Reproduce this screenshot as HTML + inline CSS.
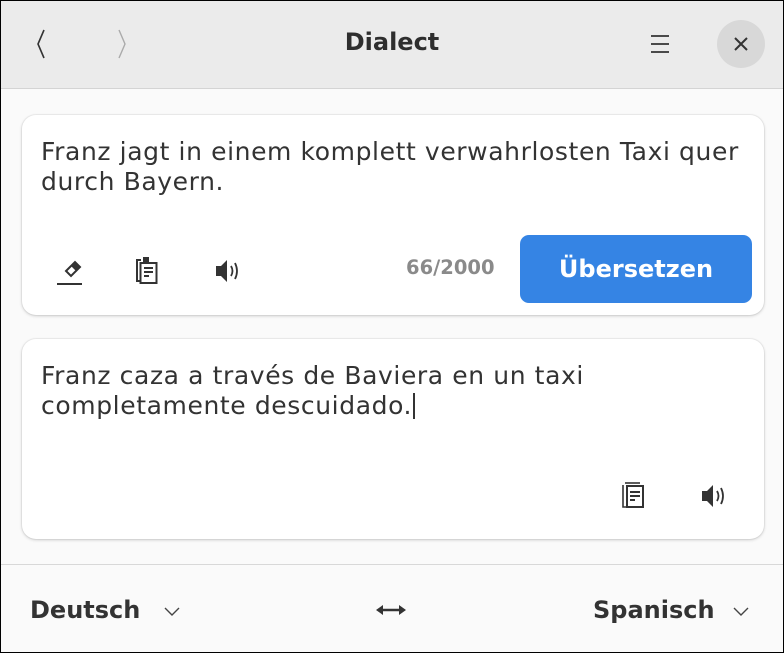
<!DOCTYPE html>
<html><head><meta charset="utf-8"><style>
*{margin:0;padding:0;box-sizing:border-box}
body{width:784px;height:653px;overflow:hidden;font-family:"DejaVu Sans","Liberation Sans",sans-serif;color:#2e2e2e;background:#000}
.win{position:absolute;left:1px;top:1px;width:782px;height:651px;background:#fafafa;overflow:hidden}
.hdr{position:absolute;left:0;top:0;width:782px;height:88px;background:#ebebeb;border-bottom:1px solid #d4d4d4}
.title{position:absolute;left:0;width:782px;top:27px;text-align:center;font-weight:bold;font-size:24px;color:#2e2e2e}
.card{position:absolute;left:21px;width:742px;height:200px;background:#fff;border-radius:14px;box-shadow:0 1px 3px rgba(0,0,0,.18),0 0 0 1px rgba(0,0,0,.04)}
.txt{position:absolute;left:19px;font-size:25px;line-height:30px;white-space:nowrap;color:#333;letter-spacing:0.6px}
.btn{position:absolute;left:498px;top:120px;width:232px;height:68px;background:#3584e4;border-radius:9px;color:#fff;font-weight:bold;font-size:24px;text-align:center;line-height:68px}
.cnt{position:absolute;left:384px;top:141px;font-weight:bold;font-size:19.5px;color:#8a8a8a}
.ftr{position:absolute;left:0;top:563px;width:782px;height:88px;border-top:1px solid #d8d8d8;background:#fafafa}
.lang{position:absolute;top:31px;font-weight:bold;font-size:24px;color:#333}
svg{position:absolute}
</style></head><body><div class="win">
<div class="hdr">
<svg style="left:32px;top:27px" width="16" height="32" viewBox="0 0 16 32"><path d="M11 2 L5 16 L11 30" fill="none" stroke="#333" stroke-width="1.6"/></svg>
<svg style="left:113px;top:27px" width="16" height="32" viewBox="0 0 16 32"><path d="M5 2 L11 16 L5 30" fill="none" stroke="#aaa" stroke-width="1.4"/></svg>
<div class="title">Dialect</div>
<svg style="left:649px;top:33px" width="20" height="20" viewBox="0 0 20 20"><path d="M1 2H19M1 10H19M1 18H19" stroke="#333" stroke-width="1.8"/></svg>
<div style="position:absolute;left:716px;top:19px;width:48px;height:48px;border-radius:50%;background:#d8d8d8"></div>
<svg style="left:732px;top:35px" width="16" height="16" viewBox="0 0 16 16"><path d="M2 2L14 14M14 2L2 14" stroke="#333" stroke-width="2"/></svg>
</div>

<div class="card" style="top:114px">
<div class="txt" style="top:22px">Franz jagt in einem komplett verwahrlosten Taxi quer</div>
<div class="txt" style="top:52px">durch Bayern.</div>
<svg style="left:34px;top:140px" width="28" height="32" viewBox="0 0 28 32"><path d="M10 16 L19 7 L24 12 L15 21 Z" fill="#fff" stroke="#333" stroke-width="2"/><path d="M15 11 L19 7 L24 12 L20 16 Z" fill="#333"/><path d="M1 29H26" stroke="#333" stroke-width="2"/></svg>
<svg style="left:111px;top:140px" width="28" height="32" viewBox="0 0 28 32"><path d="M8 5H4V26H8" fill="none" stroke="#333" stroke-width="2"/><rect x="10" y="2" width="6" height="5" fill="#333"/><rect x="7.5" y="8" width="16" height="20" fill="#fff" stroke="#333" stroke-width="2"/><path d="M11 13H20M11 17H20M11 21H16" stroke="#333" stroke-width="2"/></svg>
<svg style="left:192px;top:141px" width="32" height="30" viewBox="0 0 32 30"><path d="M2 10H7L13 4V26L7 20H2Z" fill="#333"/><path d="M17 10Q20 15 17 20M21 7Q25 15 21 23" fill="none" stroke="#333" stroke-width="1.8"/></svg>
<div class="cnt">66/2000</div>
<div class="btn">Übersetzen</div>
</div>

<div class="card" style="top:338px">
<div class="txt" style="top:22px">Franz caza a través de Baviera en un taxi</div>
<div class="txt" style="top:52px">completamente descuidado.<span style="display:inline-block;width:1.5px;height:26px;background:#333;vertical-align:-5px;margin-left:1px"></span></div>
<svg style="left:598px;top:142px" width="28" height="30" viewBox="0 0 28 30"><path d="M3 4V26H7" fill="none" stroke="#333" stroke-width="1.6"/><path d="M5 2H20" stroke="#333" stroke-width="1.6"/><rect x="7" y="5" width="16" height="21" fill="#fff" stroke="#333" stroke-width="2"/><path d="M10 11H20M10 15H20M10 19H15" stroke="#333" stroke-width="2"/></svg>
<svg style="left:678px;top:142px" width="32" height="30" viewBox="0 0 32 30"><path d="M2 10H7L13 4V26L7 20H2Z" fill="#333"/><path d="M17 10Q20 15 17 20M21 7Q25 15 21 23" fill="none" stroke="#333" stroke-width="1.8"/></svg>
</div>

<div class="ftr">
<div class="lang" style="left:29px">Deutsch</div>
<svg style="left:162px;top:40px" width="18" height="12" viewBox="0 0 18 12"><path d="M2 3L9 10L16 3" fill="none" stroke="#444" stroke-width="1.4"/></svg>
<svg style="left:374px;top:38px" width="32" height="14" viewBox="0 0 32 14"><path d="M5 7H27" stroke="#333" stroke-width="2.5"/><path d="M1 7L8 2V12Z M31 7L24 2V12Z" fill="#333"/></svg>
<div class="lang" style="left:592px">Spanisch</div>
<svg style="left:731px;top:40px" width="18" height="12" viewBox="0 0 18 12"><path d="M2 3L9 10L16 3" fill="none" stroke="#444" stroke-width="1.4"/></svg>
</div>
</div></body></html>
